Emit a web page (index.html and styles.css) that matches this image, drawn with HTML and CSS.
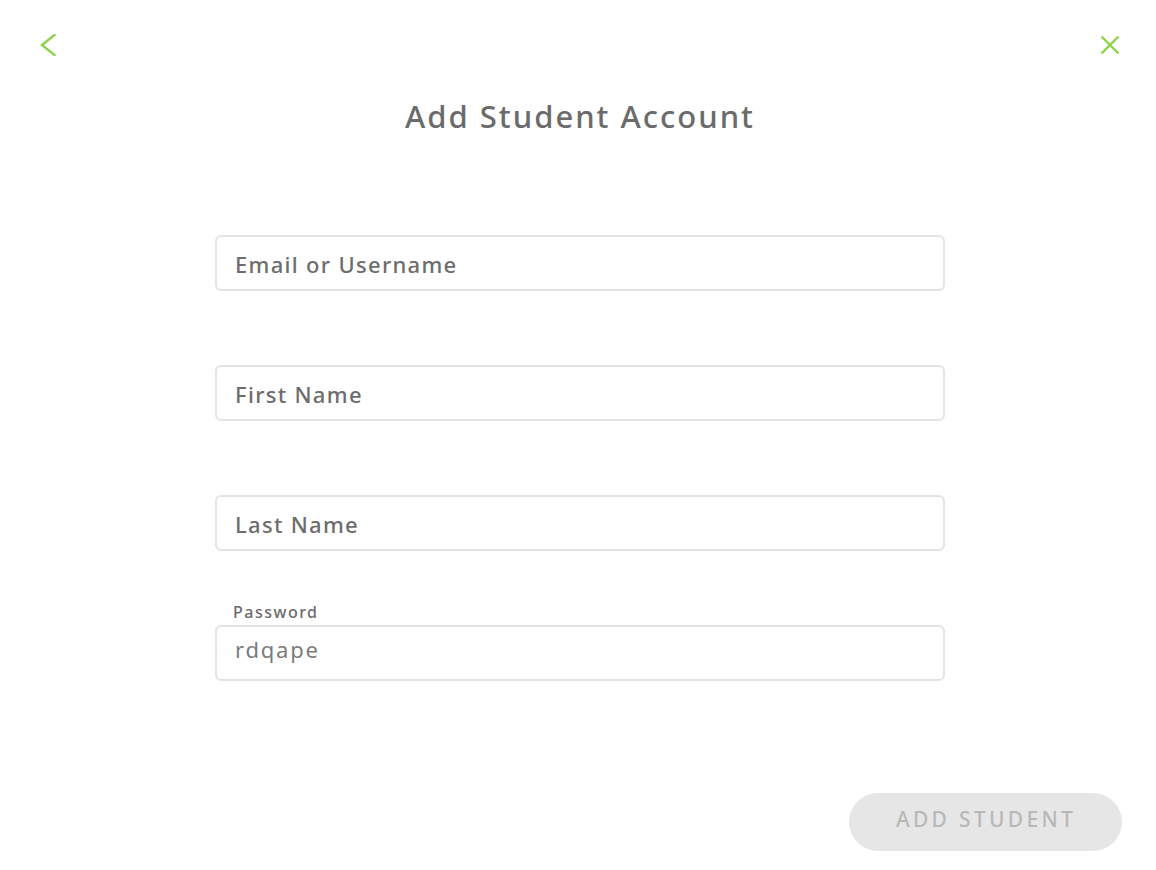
FILE: index.html
```html
<!DOCTYPE html>
<html lang="en">
<head>
<meta charset="utf-8">
<title>Add Student Account</title>
<link rel="stylesheet" href="styles.css">
</head>
<body>
<div class="page">
  <div class="topbar">
    <button class="icon-btn back" aria-label="Back">
      <svg width="16" height="22" viewBox="0 0 16 22"><path d="M14.5 1 L2 11 L14.5 21" fill="none" stroke="#8cd24c" stroke-width="2.4" stroke-linecap="square"/></svg>
    </button>
    <button class="icon-btn close" aria-label="Close">
      <svg width="20" height="20" viewBox="0 0 20 20"><path d="M1.5 1.5 L18.5 18.5 M18.5 1.5 L1.5 18.5" fill="none" stroke="#8cd24c" stroke-width="2.4"/></svg>
    </button>
  </div>
  <h1 class="title">Add Student Account</h1>
  <form class="form">
    <div class="field">
      <label class="label"></label>
      <input class="input" type="text" placeholder="Email or Username">
    </div>
    <div class="field">
      <label class="label"></label>
      <input class="input" type="text" placeholder="First Name">
    </div>
    <div class="field">
      <label class="label"></label>
      <input class="input" type="text" placeholder="Last Name">
    </div>
    <div class="field">
      <label class="label">Password</label>
      <input class="input value" type="text" value="rdqape">
    </div>
  </form>
  <div class="footer">
    <button class="submit" disabled>ADD STUDENT</button>
  </div>
</div>
</body>
</html>
```
FILE: styles.css
```css
html, body {
  margin: 0;
  padding: 0;
  background: #ffffff;
}
body {
  font-family: "Noto Sans", "Open Sans", sans-serif;
  color: #6b6b6b;
}
.page {
  width: 1156px;
  height: 870px;
  display: flex;
  flex-direction: column;
}
.topbar {
  display: flex;
  justify-content: space-between;
  align-items: flex-start;
  padding: 34px 36px 0 40px;
  height: 22px;
}
.icon-btn {
  background: none;
  border: 0;
  padding: 0;
  margin: 0;
  display: block;
  line-height: 0;
}
.close {
  margin-top: 1px;
}
.title {
  margin: 40px 0 0 4px;
  text-align: center;
  font-size: 31px;
  line-height: 40px;
  font-weight: 500;
  color: #6b6b6b;
  letter-spacing: 2px;
}
.form {
  width: 730px;
  margin: 73px 0 0 215px;
  display: flex;
  flex-direction: column;
}
.field {
  display: flex;
  flex-direction: column;
  margin-bottom: 48px;
}
.label {
  height: 26px;
  line-height: 26px;
  font-size: 16px;
  font-weight: 500;
  color: #6b6b6b;
  padding-left: 18px;
  letter-spacing: 1.5px;
}
.input {
  box-sizing: border-box;
  height: 56px;
  width: 730px;
  border: 2px solid #e4e4e4;
  border-radius: 6px;
  padding: 2px 18px 0 18px;
  font-family: inherit;
  font-size: 22px;
  font-weight: 500;
  color: #777777;
  letter-spacing: 1.3px;
  outline: none;
  background: #fff;
}
.input::placeholder {
  color: #6d6d6d;
  opacity: 1;
}
.input.value {
  font-weight: 400;
  color: #7c7c7c;
  letter-spacing: 1.8px;
  padding: 0 18px 8px 18px;
}
.footer {
  display: flex;
  justify-content: flex-end;
  padding-right: 34px;
  margin-top: 64px;
}
.submit {
  width: 273px;
  height: 58px;
  border: 0;
  border-radius: 29px;
  background: #e6e6e6;
  color: #b8b8b8;
  font-family: inherit;
  font-size: 21px;
  font-weight: 500;
  letter-spacing: 3.3px;
  padding: 0 0 7px 1px;
}
```
